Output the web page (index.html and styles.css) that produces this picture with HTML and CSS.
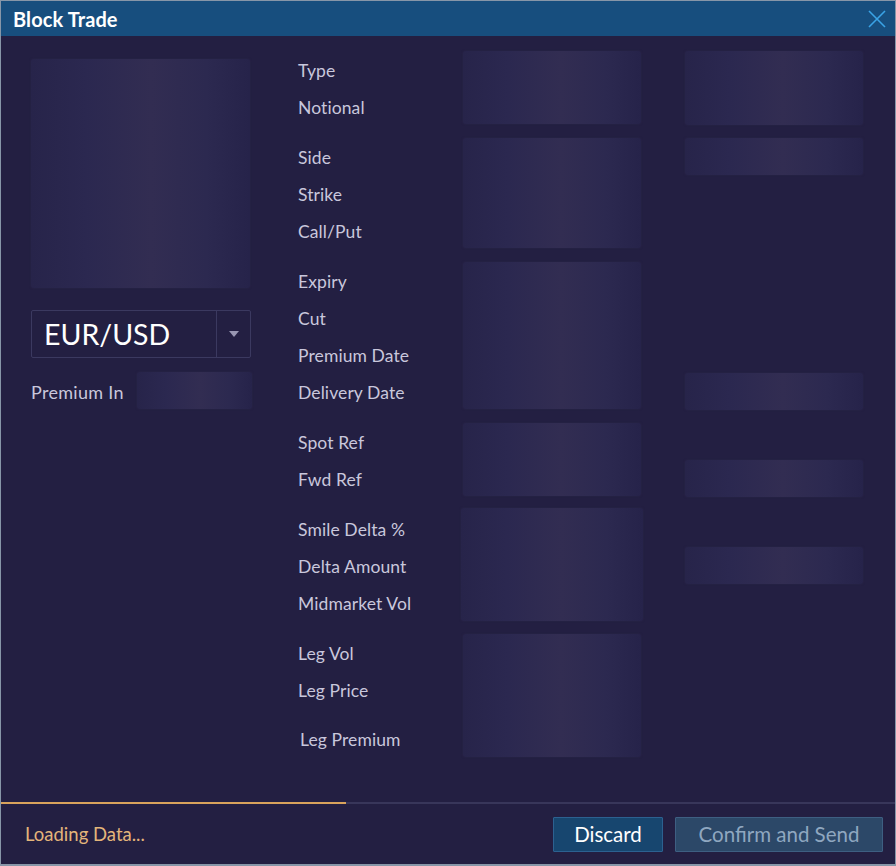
FILE: index.html
```html
<!DOCTYPE html>
<html>
<head>
<meta charset="utf-8">
<link rel="stylesheet" href="styles.css">
</head>
<body>
<div class="window">
  <div class="titlebar">
    <span class="title">Block Trade</span>
    <svg class="close" width="18" height="18" viewBox="0 0 18 18"><path d="M1 1 L17 17 M17 1 L1 17" stroke="#3aa3e6" stroke-width="1.6" fill="none"/></svg>
  </div>
  <div class="content">
    <div class="left">
      <div class="sk sk-image"></div>
      <div class="select">
        <span class="select-text">EUR/USD</span>
        <span class="select-arrow"><svg width="10" height="6" viewBox="0 0 10 6"><path d="M0 0 H10 L5 6 Z" fill="#9896b2"/></svg></span>
      </div>
      <div class="prem-row">
        <span class="label prem-label">Premium In</span>
        <div class="sk sk-prem"></div>
      </div>
    </div>
    <div class="form">
      <div class="group">
        <div class="labels"><div class="row">Type</div><div class="row">Notional</div></div>
        <div class="col3"><div class="sk fill"></div></div>
        <div class="col4"><div class="sk fill"></div></div>
      </div>
      <div class="group">
        <div class="labels"><div class="row">Side</div><div class="row">Strike</div><div class="row">Call/Put</div></div>
        <div class="col3"><div class="sk fill"></div></div>
        <div class="col4"><div class="slot"><div class="sk fill"></div></div><div class="slot"></div><div class="slot"></div></div>
      </div>
      <div class="group">
        <div class="labels"><div class="row">Expiry</div><div class="row">Cut</div><div class="row">Premium Date</div><div class="row">Delivery Date</div></div>
        <div class="col3"><div class="sk fill"></div></div>
        <div class="col4"><div class="slot"></div><div class="slot"></div><div class="slot"></div><div class="slot"><div class="sk fill"></div></div></div>
      </div>
      <div class="group">
        <div class="labels"><div class="row">Spot Ref</div><div class="row">Fwd Ref</div></div>
        <div class="col3"><div class="sk fill"></div></div>
        <div class="col4"><div class="slot"></div><div class="slot"><div class="sk fill"></div></div></div>
      </div>
      <div class="group">
        <div class="labels"><div class="row">Smile Delta %</div><div class="row">Delta Amount</div><div class="row">Midmarket Vol</div></div>
        <div class="col3 wide"><div class="sk fill"></div></div>
        <div class="col4"><div class="slot"></div><div class="slot"><div class="sk fill"></div></div><div class="slot"></div></div>
      </div>
      <div class="group">
        <div class="labels"><div class="row">Leg Vol</div><div class="row">Leg Price</div><div class="row tall">Leg Premium</div></div>
        <div class="col3"><div class="sk fill"></div></div>
        <div class="col4"></div>
      </div>
    </div>
  </div>
  <div class="progress"><div class="progress-bar"></div></div>
  <div class="footer">
    <span class="status">Loading Data...</span>
    <div class="buttons">
      <button class="btn btn-discard">Discard</button>
      <button class="btn btn-confirm">Confirm and Send</button>
    </div>
  </div>
</div>
</body>
</html>
```
FILE: styles.css
```css
* { box-sizing: border-box; }
html, body { margin: 0; padding: 0; background: #231f42; }
body { font-family: "Lato", "Noto Sans", sans-serif; }

.window {
  width: 896px;
  height: 866px;
  border: 1px solid #8796a8;
  border-bottom-width: 2px;
  display: flex;
  flex-direction: column;
  background: #231f42;
}

.titlebar {
  height: 35px;
  flex: none;
  background: #174e7e;
  display: flex;
  align-items: center;
  justify-content: space-between;
  padding: 0 9px 0 12px;
}
.title {
  color: #ffffff;
  font-size: 20px;
  font-weight: 700;
  letter-spacing: 0.1px;
}
.close { display: block; }

.content {
  flex: 1;
  display: flex;
  padding: 15px 0 0 30px;
}

.left {
  width: 221px;
  flex: none;
  padding-top: 8px;
}
.sk {
  background: linear-gradient(90deg, #27244a 0%, #2b2850 25%, #322d52 55%, #2c2950 80%, #26234a 100%);
  border-radius: 3px;
  box-shadow: 0 0 2px rgba(50, 46, 80, 0.6);
}
.sk-image { width: 219px; height: 229px; }

.select {
  margin-top: 22px;
  width: 220px;
  height: 48px;
  border: 1px solid #3b3960;
  border-radius: 2px;
  display: flex;
  align-items: stretch;
}
.select-text {
  flex: 1;
  color: #ffffff;
  font-size: 28.5px;
  line-height: 46px;
  padding-left: 12px;
}
.select-arrow {
  width: 34px;
  border-left: 1px solid #3b3960;
  display: flex;
  align-items: center;
  justify-content: center;
}
.select-arrow svg { display: block; }

.prem-row {
  margin-top: 14px;
  display: flex;
  align-items: center;
  height: 37px;
}
.label, .row {
  color: #c9c7dc;
  font-size: 17.5px;
  letter-spacing: 0.1px;
}
.prem-label {
  width: 106px;
  font-size: 18px;
  letter-spacing: 0.3px;
  padding-top: 3px;
}
.sk-prem { width: 115px; height: 37px; }

.form {
  margin-left: 46px;
  display: flex;
  flex-direction: column;
}
.group {
  display: flex;
  margin-bottom: 13px;
}
.labels {
  width: 165px;
  display: flex;
  flex-direction: column;
}
.row {
  height: 37px;
  display: flex;
  align-items: center;
  padding-top: 1px;
}
.row.tall {
  height: 50px;
  align-items: flex-end;
  padding-bottom: 8px;
  padding-left: 2px;
}
.col3 {
  width: 178px;
  display: flex;
  flex-direction: column;
  padding: 0 0 1px;
}
.col3.wide { margin: -2px -2px 0; width: 182px; padding-bottom: 0; }
.col3.wide .fill { height: 113px; flex: none; }
.col4 {
  width: 178px;
  margin-left: 44px;
  display: flex;
  flex-direction: column;
}
.fill { flex: 1; }
.slot { height: 37px; display: flex; flex-direction: column; }
.slot .fill { flex: 1; }

.progress {
  height: 2px;
  flex: none;
  background: #38365a;
  display: flex;
  align-items: flex-end;
}
.progress-bar {
  width: 345px;
  height: 2px;
  background: #d9a35c;
}

.footer {
  height: 60px;
  flex: none;
  display: flex;
  align-items: center;
  justify-content: space-between;
  padding: 0 12px 0 24px;
}
.status {
  color: #e3b57a;
  font-size: 18.5px;
}
.buttons { display: flex; gap: 12px; }
.btn {
  font-family: "Lato", "Noto Sans", sans-serif;
  font-size: 20.5px;
  height: 35px;
  border-radius: 1px;
  padding: 0;
  cursor: default;
}
.btn-discard {
  width: 110px;
  background: #17466f;
  border: 1px solid #2c6190;
  color: #ffffff;
}
.btn-confirm {
  width: 208px;
  background: #2c4868;
  border: 1px solid #3e5f82;
  color: #8fa7c0;
}
```
